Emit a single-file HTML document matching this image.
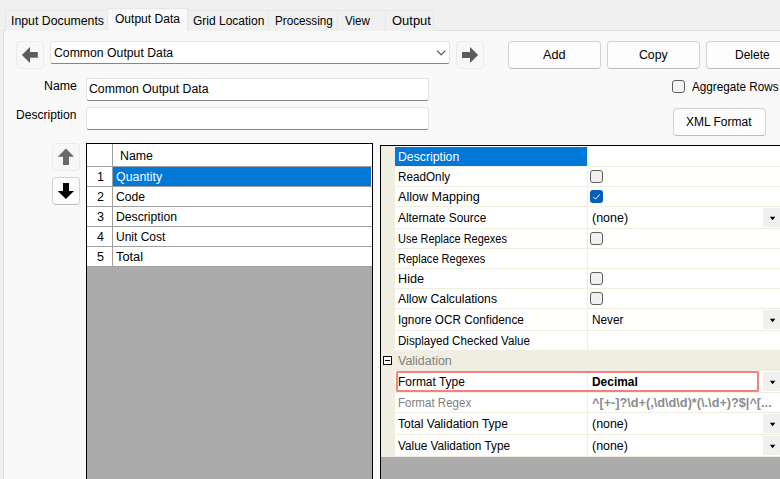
<!DOCTYPE html>
<html><head><meta charset="utf-8">
<style>
*{box-sizing:border-box;margin:0;padding:0}
html,body{width:780px;height:479px;overflow:hidden;background:#f0f0f0}
body{position:relative;font-family:"Liberation Sans",sans-serif;font-size:12.5px;color:#000}
.a{position:absolute}
.t{position:absolute;white-space:nowrap;line-height:16px;height:16px;transform-origin:0 0}
.tab{position:absolute;top:10px;height:21px;background:#f0f0f0;border:1px solid #e6e6e6;border-bottom:none}
.page{position:absolute;left:3px;top:30px;width:790px;height:460px;background:#f9f9f9;border:1px solid #e0e0e0}
.btn{position:absolute;background:#fdfdfd;border:1px solid #d2d2d2;border-bottom-color:#bcbcbc;border-radius:4px}
.btn.d{background:#f7f7f7;border-color:#ececec}
.inp{position:absolute;background:#fff;border:1px solid #e4e4e4;border-bottom:1px solid #868686;border-radius:3px}
.cb{position:absolute;width:13px;height:13px;background:#f0f0f0;border:1px solid #5e5e5e;border-radius:3px}
.cbc{position:absolute;width:13px;height:13px;background:#005fb8;border-radius:3px}
.dd{position:absolute;left:763px;width:20px;height:19px;background:#f0f0f0}
</style></head><body>
<div class="page"></div>
<div class="tab" style="left:5px;width:103px"></div>
<div class="tab" style="left:187px;width:82px"></div>
<div class="tab" style="left:268px;width:70px"></div>
<div class="tab" style="left:337px;width:49px"></div>
<div class="tab" style="left:385px;width:49px"></div>
<div class="tab" style="left:107px;width:81px;top:8px;height:23px;background:#f9f9f9"></div>
<div class="btn d" style="left:16px;top:41px;width:28px;height:28px"></div>
<div class="inp" style="left:50px;top:41px;width:400px;height:23px"></div>
<div class="btn d" style="left:456px;top:41px;width:28px;height:28px"></div>
<div class="btn" style="left:508px;top:41px;width:93px;height:28px"></div>
<div class="btn" style="left:607px;top:41px;width:93px;height:28px"></div>
<div class="btn" style="left:706px;top:41px;width:93px;height:28px"></div>
<div class="inp" style="left:86px;top:78px;width:343px;height:23px"></div>
<div class="inp" style="left:86px;top:107px;width:343px;height:23px"></div>
<div class="cb" style="left:672px;top:80px;background:#f4f4f4"></div>
<div class="btn" style="left:673px;top:108px;width:93px;height:28px"></div>
<div class="btn d" style="left:52px;top:143px;width:28px;height:28px"></div>
<div class="btn" style="left:52px;top:177px;width:28px;height:28px"></div>
<div class="a" style="left:86px;top:143px;width:287px;height:340px;background:#ababab;border:1px solid #000"></div>
<div class="a" style="left:87px;top:144px;width:285px;height:123px;background:#fff"></div>
<div class="a" style="left:112px;top:144px;width:1px;height:123px;background:#a0a0a0"></div>
<div class="a" style="left:87px;top:166px;width:285px;height:1px;background:#a0a0a0"></div>
<div class="a" style="left:87px;top:186px;width:285px;height:1px;background:#a0a0a0"></div>
<div class="a" style="left:87px;top:206px;width:285px;height:1px;background:#a0a0a0"></div>
<div class="a" style="left:87px;top:226px;width:285px;height:1px;background:#a0a0a0"></div>
<div class="a" style="left:87px;top:246px;width:285px;height:1px;background:#a0a0a0"></div>
<div class="a" style="left:87px;top:266px;width:285px;height:1px;background:#a0a0a0"></div>
<div class="a" style="left:113px;top:167px;width:258px;height:19px;background:#0078d7"></div>
<div class="a" style="left:380px;top:145px;width:410px;height:340px;background:#ababab;border:1px solid #000"></div>
<div class="a" style="left:381px;top:146px;width:400px;height:311px;background:#fff"></div>
<div class="a" style="left:381px;top:146px;width:14px;height:311px;background:#f0eee1"></div>
<div class="a" style="left:395px;top:147px;width:192px;height:19px;background:#0078d7"></div>
<div class="a" style="left:395px;top:166px;width:390px;height:1px;background:#f0eee1"></div>
<div class="cb" style="left:590px;top:170px"></div>
<div class="a" style="left:395px;top:186px;width:390px;height:1px;background:#f0eee1"></div>
<div class="cbc" style="left:590px;top:190px"><svg width="13" height="13" viewBox="0 0 13 13" style="position:absolute;left:0;top:0"><path d="M3.3 6.9 L5.5 9.1 L9.9 4.3" fill="none" stroke="#fff" stroke-width="1"/></svg></div>
<div class="a" style="left:395px;top:206px;width:390px;height:1px;background:#f0eee1"></div>
<div class="dd" style="top:208px"></div>
<svg class="a" style="left:769px;top:216px" width="8" height="5" viewBox="0 0 8 5"><path d="M0.8 0.7 L6.4 0.7 L3.6 4.2 Z" fill="#000"/></svg>
<div class="a" style="left:395px;top:228px;width:390px;height:1px;background:#f0eee1"></div>
<div class="cb" style="left:590px;top:232px"></div>
<div class="a" style="left:395px;top:248px;width:390px;height:1px;background:#f0eee1"></div>
<div class="a" style="left:395px;top:268px;width:390px;height:1px;background:#f0eee1"></div>
<div class="cb" style="left:590px;top:272px"></div>
<div class="a" style="left:395px;top:288px;width:390px;height:1px;background:#f0eee1"></div>
<div class="cb" style="left:590px;top:292px"></div>
<div class="a" style="left:395px;top:308px;width:390px;height:1px;background:#f0eee1"></div>
<div class="dd" style="top:310px"></div>
<svg class="a" style="left:769px;top:318px" width="8" height="5" viewBox="0 0 8 5"><path d="M0.8 0.7 L6.4 0.7 L3.6 4.2 Z" fill="#000"/></svg>
<div class="a" style="left:395px;top:330px;width:390px;height:1px;background:#f0eee1"></div>
<div class="a" style="left:395px;top:350px;width:390px;height:1px;background:#f0eee1"></div>
<div class="a" style="left:381px;top:350px;width:400px;height:21px;background:#f0eee1"></div>
<div class="a" style="left:383px;top:356px;width:9px;height:9px;background:#fff;border:1px solid #000"></div>
<div class="a" style="left:385px;top:360px;width:5px;height:1px;background:#000"></div>
<div class="dd" style="top:372px"></div>
<svg class="a" style="left:769px;top:380px" width="8" height="5" viewBox="0 0 8 5"><path d="M0.8 0.7 L6.4 0.7 L3.6 4.2 Z" fill="#000"/></svg>
<div class="a" style="left:395px;top:392px;width:390px;height:1px;background:#f0eee1"></div>
<div class="a" style="left:395px;top:412px;width:390px;height:1px;background:#f0eee1"></div>
<div class="dd" style="top:414px"></div>
<svg class="a" style="left:769px;top:422px" width="8" height="5" viewBox="0 0 8 5"><path d="M0.8 0.7 L6.4 0.7 L3.6 4.2 Z" fill="#000"/></svg>
<div class="a" style="left:395px;top:434px;width:390px;height:1px;background:#f0eee1"></div>
<div class="dd" style="top:436px"></div>
<svg class="a" style="left:769px;top:444px" width="8" height="5" viewBox="0 0 8 5"><path d="M0.8 0.7 L6.4 0.7 L3.6 4.2 Z" fill="#000"/></svg>
<div class="a" style="left:395px;top:456px;width:390px;height:1px;background:#f0eee1"></div>
<div class="a" style="left:587px;top:146px;width:1px;height:204px;background:#f0eee1"></div>
<div class="a" style="left:587px;top:371px;width:1px;height:86px;background:#f0eee1"></div>
<div class="a" style="left:396px;top:371px;width:363px;height:21px;border:2px solid #f28282;border-radius:1.5px"></div>
<div class="t" style="left:10.99px;top:12.65px;transform:scaleX(0.9836)">Input Documents</div>
<div class="t" style="left:115.30px;top:10.65px;transform:scaleX(0.9636)">Output Data</div>
<div class="t" style="left:192.67px;top:12.65px;transform:scaleX(0.9589)">Grid Location</div>
<div class="t" style="left:274.85px;top:12.65px;transform:scaleX(0.9335)">Processing</div>
<div class="t" style="left:344.79px;top:12.65px;transform:scaleX(0.9275)">View</div>
<div class="t" style="left:392.30px;top:12.65px;transform:scaleX(1.0362)">Output</div>
<div class="t" style="left:53.71px;top:44.65px;transform:scaleX(0.9796)">Common Output Data</div>
<div class="t" style="left:543.12px;top:46.65px;transform:scaleX(1.0148)">Add</div>
<div class="t" style="left:638.60px;top:46.65px;transform:scaleX(0.9804)">Copy</div>
<div class="t" style="left:734.70px;top:46.65px;transform:scaleX(0.9590)">Delete</div>
<div class="t" style="left:43.81px;top:77.65px;transform:scaleX(0.9867)">Name</div>
<div class="t" style="left:88.71px;top:80.65px;transform:scaleX(0.9828)">Common Output Data</div>
<div class="t" style="left:16.03px;top:106.65px;transform:scaleX(0.9657)">Description</div>
<div class="t" style="left:691.70px;top:78.65px;transform:scaleX(0.9359)">Aggregate Rows</div>
<div class="t" style="left:685.84px;top:113.65px;transform:scaleX(0.9588)">XML Format</div>
<div class="t" style="left:120.12px;top:147.65px;transform:scaleX(0.9887)">Name</div>
<div class="t" style="left:115.90px;top:168.65px;transform:scaleX(0.9920);color:#fff">Quantity</div>
<div class="t" style="left:115.90px;top:188.65px;transform:scaleX(0.9735)">Code</div>
<div class="t" style="left:115.90px;top:208.65px;transform:scaleX(0.9764)">Description</div>
<div class="t" style="left:115.90px;top:228.65px;transform:scaleX(0.9610)">Unit Cost</div>
<div class="t" style="left:115.90px;top:248.65px;transform:scaleX(1.0240)">Total</div>
<div class="t" style="left:96.92px;top:168.65px;transform:scaleX(1.0000)">1</div>
<div class="t" style="left:97.07px;top:188.65px;transform:scaleX(1.0000)">2</div>
<div class="t" style="left:97.07px;top:208.65px;transform:scaleX(1.0000)">3</div>
<div class="t" style="left:97.07px;top:228.65px;transform:scaleX(1.0000)">4</div>
<div class="t" style="left:97.07px;top:248.65px;transform:scaleX(1.0000)">5</div>
<div class="t" style="left:397.75px;top:148.65px;transform:scaleX(0.9790);color:#fff">Description</div>
<div class="t" style="left:397.75px;top:168.65px;transform:scaleX(0.9372)">ReadOnly</div>
<div class="t" style="left:397.75px;top:188.65px;transform:scaleX(1.0068)">Allow Mapping</div>
<div class="t" style="left:397.75px;top:209.65px;transform:scaleX(0.9483)">Alternate Source</div>
<div class="t" style="left:397.75px;top:230.65px;transform:scaleX(0.8756)">Use Replace Regexes</div>
<div class="t" style="left:397.75px;top:250.65px;transform:scaleX(0.8837)">Replace Regexes</div>
<div class="t" style="left:397.75px;top:270.65px;transform:scaleX(1.0109)">Hide</div>
<div class="t" style="left:397.75px;top:290.65px;transform:scaleX(0.9760)">Allow Calculations</div>
<div class="t" style="left:397.75px;top:311.65px;transform:scaleX(0.9437)">Ignore OCR Confidence</div>
<div class="t" style="left:397.75px;top:332.65px;transform:scaleX(0.9274)">Displayed Checked Value</div>
<div class="t" style="left:397.75px;top:352.65px;transform:scaleX(0.9966);color:#7f7f7f">Validation</div>
<div class="t" style="left:397.75px;top:373.65px;transform:scaleX(0.9551)">Format Type</div>
<div class="t" style="left:397.75px;top:394.65px;transform:scaleX(0.9242);color:#7f7f7f">Format Regex</div>
<div class="t" style="left:397.75px;top:415.65px;transform:scaleX(0.9632)">Total Validation Type</div>
<div class="t" style="left:397.75px;top:437.65px;transform:scaleX(0.9424)">Value Validation Type</div>
<div class="t" style="left:591.90px;top:209.65px;transform:scaleX(0.9980)">(none)</div>
<div class="t" style="left:591.90px;top:311.65px;transform:scaleX(0.9447)">Never</div>
<div class="t" style="left:591.90px;top:373.65px;transform:scaleX(0.9551);font-weight:bold">Decimal</div>
<div class="t" style="left:592.30px;top:394.65px;transform:scaleX(1.0164);color:#8c8c8c;font-weight:bold">^[+-]?\d+(,\d\d\d)*(\.\d+)?$|^[...</div>
<div class="t" style="left:591.90px;top:415.65px;transform:scaleX(0.9924)">(none)</div>
<div class="t" style="left:591.90px;top:437.65px;transform:scaleX(0.9924)">(none)</div>
<svg class="a" style="left:0;top:0" width="780" height="479" viewBox="0 0 780 479">
<path d="M21.9 55 L30 47.1 L30 52.1 L37.8 52.1 L37.8 57.8 L30 57.8 L30 63 Z" fill="#5c5c5c"/>
<path d="M478.1 55 L470 47 L470 52 L462 52 L462 57.9 L470 57.9 L470 63 Z" fill="#5c5c5c"/>
<path d="M437.4 51 L441.2 54.8 L445 51" fill="none" stroke="#555" stroke-width="1.1" stroke-linecap="round" stroke-linejoin="round"/>
<path d="M65.9 148.5 L74 156.8 L69 156.8 L69 165 L63 165 L63 156.8 L57.8 156.8 Z" fill="#6a6a6a"/>
<path d="M65.9 199 L74 191 L69 191 L69 183.1 L63 183.1 L63 191 L57.8 191 Z" fill="#000"/>
</svg>
</body></html>
